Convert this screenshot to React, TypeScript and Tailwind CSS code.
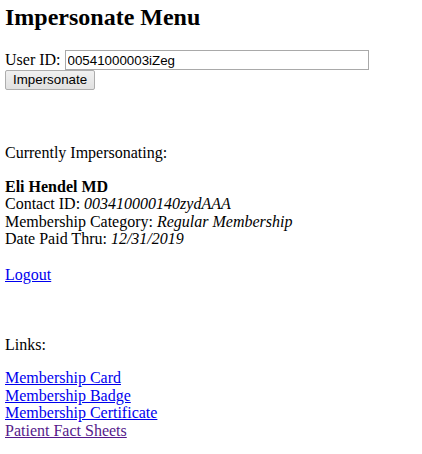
export default function App() {
  return (
    <div className="min-h-[454px] bg-white px-[5px] pt-[3px] font-['Liberation_Serif',serif] text-[16px] leading-[17.6px] text-black">
      <h1 className="text-[24px] font-bold leading-[28px]">Impersonate Menu</h1>

      <div className="mt-[19px] flex items-center">
        <span>User ID:&nbsp;</span>
        <input
          type="text"
          defaultValue="00541000003iZeg"
          className="h-[20px] w-[304px] border border-[#a9a9a9] px-[2px] font-['Liberation_Sans',sans-serif] text-[13.33px] text-black outline-none"
        />
      </div>
      <button className="h-[20px] rounded-[2px] border border-[#adadad] bg-gradient-to-b from-[#f0f0f0] to-[#e1e1e1] px-[7px] font-['Liberation_Sans',sans-serif] text-[13.33px] leading-[16px] text-black">
        Impersonate
      </button>

      <div className="mt-[54px]">
        <p>Currently Impersonating:</p>
        <p className="mt-4">
          <b>Eli Hendel MD</b>
          <br />
          Contact ID: <i>003410000140zydAAA</i>
          <br />
          Membership Category: <i>Regular Membership</i>
          <br />
          Date Paid Thru: <i>12/31/2019</i>
        </p>
        <p className="mt-[17.6px]">
          <a href="#" className="text-[#0000ee] underline">
            Logout
          </a>
        </p>
      </div>

      <div className="mt-[52.5px]">
        <p>Links:</p>
        <p className="mt-4">
          <a href="#" className="text-[#0000ee] underline">Membership Card</a>
          <br />
          <a href="#" className="text-[#0000ee] underline">Membership Badge</a>
          <br />
          <a href="#" className="text-[#0000ee] underline">Membership Certificate</a>
          <br />
          <a href="#" className="text-[#551a8b] underline">Patient Fact Sheets</a>
        </p>
      </div>
    </div>
  );
}
